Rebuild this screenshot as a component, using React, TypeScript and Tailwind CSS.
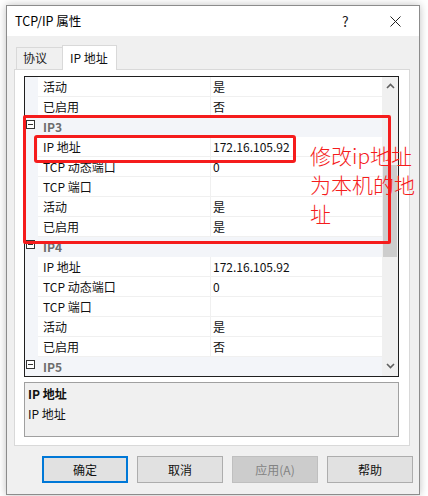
import React from 'react'

type Row =
  | { kind: 'cat'; label: string }
  | { kind: 'prop'; name: string; value: string }

const ROWS: Row[] = [
  { kind: 'prop', name: '活动', value: '是' },
  { kind: 'prop', name: '已启用', value: '否' },
  { kind: 'cat', label: 'IP3' },
  { kind: 'prop', name: 'IP 地址', value: '172.16.105.92' },
  { kind: 'prop', name: 'TCP 动态端口', value: '0' },
  { kind: 'prop', name: 'TCP 端口', value: '' },
  { kind: 'prop', name: '活动', value: '是' },
  { kind: 'prop', name: '已启用', value: '是' },
  { kind: 'cat', label: 'IP4' },
  { kind: 'prop', name: 'IP 地址', value: '172.16.105.92' },
  { kind: 'prop', name: 'TCP 动态端口', value: '0' },
  { kind: 'prop', name: 'TCP 端口', value: '' },
  { kind: 'prop', name: '活动', value: '是' },
  { kind: 'prop', name: '已启用', value: '否' },
  { kind: 'cat', label: 'IP5' },
]

function MinusBox() {
  return (
    <div className="absolute left-[1px] top-[3px] w-[9px] h-[9px] border border-[#333] bg-white flex items-center justify-center">
      <div className="w-[5px] h-px bg-[#333]" />
    </div>
  )
}

function GridRow({ row }: { row: Row }) {
  if (row.kind === 'cat') {
    return (
      <div className="relative h-5 shrink-0 bg-[#f3f5f9] flex items-center">
        <MinusBox />
        <span className="pl-[18px] font-bold text-[#6d6d6d] leading-5">{row.label}</span>
      </div>
    )
  }
  return (
    <div className="h-5 shrink-0 flex">
      <div className="w-[13px] shrink-0 bg-[#f3f5f9]" />
      <div className="w-[173px] shrink-0 border-r border-b border-[#f0f0f0] pl-[5px] leading-[19px] text-[#111]">
        {row.name}
      </div>
      <div className="flex-1 border-b border-[#f0f0f0] pl-[2px] leading-[19px] text-[#111]">{row.value}</div>
    </div>
  )
}

function Chevron({ up }: { up?: boolean }) {
  return (
    <svg width="9" height="6" viewBox="0 0 9 6" className={up ? '' : 'rotate-180'}>
      <path d="M1 5 L4.5 1.5 L8 5" fill="none" stroke="#606060" strokeWidth="1.6" />
    </svg>
  )
}

function Button({ label, primary, disabled }: { label: string; primary?: boolean; disabled?: boolean }) {
  const cls = primary
    ? 'border-2 border-[#0078d7] bg-[#e1e1e1] text-[#111]'
    : disabled
      ? 'border border-[#bfbfbf] bg-[#cccccc] text-[#838383]'
      : 'border border-[#adadad] bg-[#e1e1e1] text-[#111]'
  return (
    <div className={`w-[86px] h-[27px] flex items-center justify-center text-[12px] ${cls}`}>
      {label}
    </div>
  )
}

export default function App() {
  return (
    <div className="relative w-[428px] h-[496px] overflow-hidden bg-white pl-[6px] pt-[5px] font-['Noto_Sans_CJK_SC',sans-serif] text-[12px]">
      <div className="w-[414px] h-[490px] border border-[#8c8c8c] bg-[#f0f0f0] flex flex-col shadow-[0_0_8px_rgba(0,0,0,0.25)]">
        {/* title bar */}
        <div className="h-[30px] bg-white flex items-center pl-[8px] shrink-0">
          <span className="text-[12.5px] text-black flex-1">TCP/IP 属性</span>
          <span className="text-[14px] text-[#222] w-[10px] mr-[38px]">?</span>
          <svg width="11" height="11" viewBox="0 0 11 11" className="mr-[18px]">
            <path d="M0.5 0.5 L10.5 10.5 M10.5 0.5 L0.5 10.5" stroke="#222" strokeWidth="1" />
          </svg>
        </div>

        {/* tabs */}
        <div className="flex items-end h-[33px] pl-[9px] shrink-0">
          <div className="w-[46px] h-[22px] border-l border-t border-[#d9d9d9] bg-[#f0f0f0] pl-[6px] leading-[20px] text-[#222]">
            协议
          </div>
          <div className="relative z-10 -mb-px w-[55px] h-[25px] border border-b-0 border-[#d9d9d9] bg-white pl-[7px] leading-[23px] text-[#111]">
            IP 地址
          </div>
        </div>

        {/* tab panel */}
        <div className="ml-[7px] w-[396px] h-[377px] border border-[#d9d9d9] bg-white pl-[9px] pt-[6px] shrink-0 flex flex-col">
          <div className="w-[375px] h-[301px] border border-[#1f1f1f] flex overflow-hidden">
            <div className="flex-1 flex flex-col overflow-hidden">
              {ROWS.map((r, i) => (
                <GridRow key={i} row={r} />
              ))}
            </div>
            <div className="w-[16px] shrink-0 bg-[#f0f0f0] flex flex-col items-center">
              <div className="h-[16px] flex items-center justify-center pt-[2px]">
                <Chevron up />
              </div>
              <div className="h-[72px]" />
              <div className="w-[14px] h-[92px] bg-[#cdcdcd]" />
              <div className="flex-1" />
              <div className="h-[18px] flex items-center justify-center pb-[2px]">
                <Chevron />
              </div>
            </div>
          </div>

          <div className="mt-[5px] w-[375px] h-[55px] border border-[#a0a0a0] bg-[#f0f0f0] pl-[3px] pt-[1px] leading-5 text-[#111]">
            <div className="font-bold">IP 地址</div>
            <div>IP 地址</div>
          </div>
        </div>

        {/* buttons */}
        <div className="mt-[10px] pl-[35px] flex gap-[9px]">
          <Button label="确定" primary />
          <Button label="取消" />
          <Button label="应用(A)" disabled />
          <Button label="帮助" />
        </div>
      </div>

      {/* red annotations */}
      <div className="absolute left-[23px] top-[115px] w-[368px] h-[129px] border-[3px] border-[#f51c1c] rounded-[2px]" />
      <div className="absolute left-[34px] top-[135px] w-[262px] h-[28px] border-[3px] border-[#f51c1c] rounded-[3px]" />
      <div className="absolute left-[310px] top-[141px] text-[21px] leading-[29px] font-light text-[#f51c1c]">
        <div>修改ip地址</div>
        <div>为本机的地</div>
        <div>址</div>
      </div>
    </div>
  )
}
